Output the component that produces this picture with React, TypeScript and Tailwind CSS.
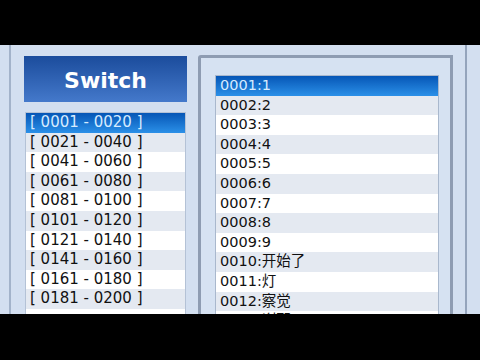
import React from 'react';

const ranges = [
  '[ 0001 - 0020 ]',
  '[ 0021 - 0040 ]',
  '[ 0041 - 0060 ]',
  '[ 0061 - 0080 ]',
  '[ 0081 - 0100 ]',
  '[ 0101 - 0120 ]',
  '[ 0121 - 0140 ]',
  '[ 0141 - 0160 ]',
  '[ 0161 - 0180 ]',
  '[ 0181 - 0200 ]',
];

const tracks = [
  '0001:1',
  '0002:2',
  '0003:3',
  '0004:4',
  '0005:5',
  '0006:6',
  '0007:7',
  '0008:8',
  '0009:9',
  '0010:开始了',
  '0011:灯',
  '0012:察觉',
  '0013:刹那',
];

function Row({ label, index }: { label: string; index: number }) {
  if (index === 0) {
    return (
      <div className="h-[19.6px] leading-[19.6px] pl-[4px] bg-gradient-to-b from-[#0656b6] to-[#2b90e8] text-[#d6ebff] whitespace-nowrap">
        {label}
      </div>
    );
  }
  return (
    <div
      className={
        'h-[19.6px] leading-[19.6px] pl-[4px] text-[#111111] whitespace-nowrap ' +
        (index % 2 === 1 ? 'bg-[#e4e9f1]' : 'bg-white')
      }
    >
      {label}
    </div>
  );
}

export default function App() {
  return (
    <div className="w-[480px] h-[360px] bg-black overflow-hidden" style={{ fontFamily: '"DejaVu Sans", "Noto Sans CJK SC", sans-serif' }}>
      <div className="h-[45px]" />
      <div className="h-[269px] bg-[#d3dff0] flex overflow-hidden">
        {/* left: switch + ranges */}
        <div className="w-[200px] shrink-0 ml-[9px] border-l-2 border-[#a3b3ca] pl-[13px] pt-[11px]">
          <div className="w-[163px] h-[46px] pt-[3px] bg-gradient-to-b from-[#1b4c9c] to-[#4479cb] flex items-center justify-center">
            <span className="text-white font-bold text-[22px] leading-none">Switch</span>
          </div>
          <div className="mt-[10px] ml-[1px] w-[161px] h-[220px] border border-[#b4c2d6] bg-white text-[15px]">
            {ranges.map((r, i) => (
              <Row key={r} label={r} index={i} />
            ))}
          </div>
        </div>

        {/* right: track list */}
        <div className="w-[255px] h-[300px] shrink-0 -ml-[11px] mt-[10px] border-[3px] border-[#8e9cb2] rounded-tl-[3px] bg-[#d6e2f2] pl-[14px] pt-[17px] pr-[12px]">
          <div className="w-[224px] border border-[#a9b8cd] bg-white text-[14.5px]">
            {tracks.map((t, i) => (
              <Row key={t} label={t} index={i} />
            ))}
          </div>
        </div>

        <div className="w-[12px] shrink-0" />
        <div className="w-[2px] shrink-0 bg-[#94a4bc]" />
      </div>
    </div>
  );
}
